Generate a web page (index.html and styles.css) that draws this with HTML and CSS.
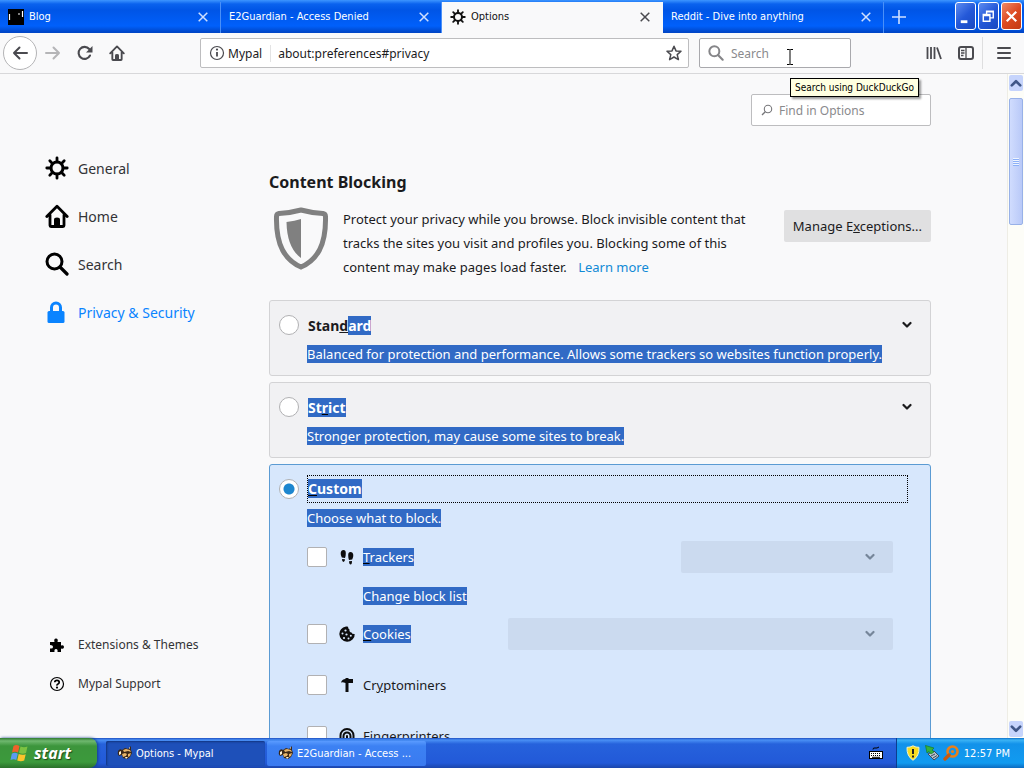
FILE: index.html
```html
<!DOCTYPE html>
<html lang="en">
<head>
    <meta charset="UTF-8">
    <meta name="viewport" content="width=device-width, initial-scale=1.0">
    <title>Options</title>
    <link rel="stylesheet" href="styles.css">
</head>
<body>

    <!-- shared icons -->
    <svg class="defs" width="0" height="0">
        <symbol id="gear" viewBox="0 0 24 24">
            <circle cx="12" cy="12" r="6" fill="none" stroke="currentColor" stroke-width="3"/>
            <path d="M12 1.8v4M12 18.2v4M1.8 12h4M18.2 12h4M4.8 4.8l2.6 2.6M16.6 16.6l2.6 2.6M4.8 19.2l2.6-2.6M16.6 7.4l2.6-2.6" stroke="currentColor" stroke-width="2.8" stroke-linecap="round"/>
        </symbol>
        <symbol id="house" viewBox="0 0 24 24">
            <path d="M1.8 12.5L12 2.2l10.2 10.3M5 11v10.5q0 1 1 1h12q1 0 1-1V11" fill="none" stroke="currentColor" stroke-width="2.8" stroke-linecap="round" stroke-linejoin="round"/>
            <path d="M9 22v-6.500q0-2 3-2t3 2V22z" fill="currentColor"/>
        </symbol>
        <symbol id="glass" viewBox="0 0 24 24">
            <circle cx="9.500" cy="9.500" r="7.500" fill="none" stroke="currentColor" stroke-width="3"/>
            <path d="M15 15l7 7" stroke="currentColor" stroke-width="3.200" stroke-linecap="round"/>
        </symbol>
        <symbol id="cross" viewBox="0 0 10 10">
            <path d="M.7.7l8.600 8.600M9.300.7L.7 9.300" stroke="currentColor" stroke-width="1.500"/>
        </symbol>
        <symbol id="chevron" viewBox="0 0 10 8">
            <path d="M1.500 2L5 5.500 8.500 2" fill="none" stroke="currentColor" stroke-width="2.200" stroke-linecap="round" stroke-linejoin="round"/>
        </symbol>
        <symbol id="raccoon" viewBox="0 0 16 16">
            <path d="M1 6q2-3 4-1l3-2 3 1 3-3v4l1 3-2 4-3 2-4-1-1-3-3 1q-2-2-1-5z" fill="#3b2716"/>
            <path d="M6 5l3-1 4 1 1 2-3-1-4 1zM5 9l3-1 2 1-1 2-3 1zM11 9l3-1-1 3-2 1z" fill="#e8b56a"/>
            <path d="M2 7l2-1v3l-2 1zM12 3l1-1v2zM8 12h3l-2 2z" fill="#fff3d6"/>
        </symbol>
    </svg>

    <header class="tabstrip">
        <div class="tab">
            <svg class="favicon" viewBox="0 0 16 16"><rect width="16" height="16" fill="#000"/><path d="M1.500 5v6M14.500 2v6M10 5h2" stroke="#fff" stroke-width="1.200"/></svg>
            <span class="tab-title">Blog</span>
            <button class="tab-close" aria-label="Close tab"><svg><use href="#cross"/></svg></button>
        </div>
        <div class="tab">
            <span class="tab-title">E2Guardian - Access Denied</span>
            <button class="tab-close" aria-label="Close tab"><svg><use href="#cross"/></svg></button>
        </div>
        <div class="tab active">
            <svg class="favicon"><use href="#gear"/></svg>
            <span class="tab-title">Options</span>
            <button class="tab-close" aria-label="Close tab"><svg><use href="#cross"/></svg></button>
        </div>
        <div class="tab">
            <span class="tab-title">Reddit - Dive into anything</span>
            <button class="tab-close" aria-label="Close tab"><svg><use href="#cross"/></svg></button>
        </div>
        <button class="new-tab" aria-label="New tab"><svg viewBox="0 0 14 14"><path d="M7 0v14M0 7h14" stroke="currentColor" stroke-width="1.600"/></svg></button>
        <div class="window-buttons">
            <button aria-label="Minimize"><svg viewBox="0 0 20 26"><path d="M5 19h7" stroke="#fff" stroke-width="3"/></svg></button>
            <button aria-label="Restore"><svg viewBox="0 0 20 26"><path d="M8 11V8h7v7h-3M8 8.500h7M4.500 11.500h7v7h-7zM4.500 12.500h7" fill="none" stroke="#fff" stroke-width="1.500"/></svg></button>
            <button class="close" aria-label="Close"><svg viewBox="0 0 20 26"><path d="M5 8.500l10 10M15 8.500l-10 10" stroke="#fff" stroke-width="2.300"/></svg></button>
        </div>
    </header>

    <div class="toolbar">
        <button class="tool back" aria-label="Back"><svg viewBox="0 0 16 16"><path d="M15 8H2M7.500 2.500L2 8l5.500 5.500" fill="none" stroke="currentColor" stroke-width="2" stroke-linecap="round" stroke-linejoin="round"/></svg></button>
        <button class="tool" aria-label="Forward" disabled><svg viewBox="0 0 16 16"><path d="M1 8h13M8.500 2.500L14 8l-5.500 5.500" fill="none" stroke="currentColor" stroke-width="2" stroke-linecap="round" stroke-linejoin="round"/></svg></button>
        <button class="tool" aria-label="Reload"><svg viewBox="0 0 16 16"><path d="M13 10.500A6 6 0 1 1 12.200 4" fill="none" stroke="currentColor" stroke-width="2.100" stroke-linecap="round"/><path d="M15.500 1v6.500H9z" fill="currentColor"/></svg></button>
        <button class="tool" aria-label="Home"><svg><use href="#house"/></svg></button>

        <div class="urlbar">
            <svg viewBox="0 0 16 16"><circle cx="8" cy="8" r="6.500" fill="none" stroke="currentColor" stroke-width="1.200"/><path d="M8 7v4.500" stroke="currentColor" stroke-width="1.800"/><circle cx="8" cy="4.600" r="1.100" fill="currentColor"/></svg>
            <span class="identity">Mypal</span>
            <input type="text" aria-label="Address" value="about:preferences#privacy">
            <svg viewBox="0 0 16 16"><path d="M8 1.200l2 4.700 5 .4-3.800 3.300 1.200 5L8 12l-4.400 2.600 1.200-5L1 6.300l5-.4z" fill="none" stroke="currentColor" stroke-width="1.500" stroke-linejoin="round"/></svg>
        </div>
        <div class="searchbar">
            <svg><use href="#glass"/></svg>
            <input type="text" aria-label="Search" placeholder="Search">
            <svg class="ibeam" viewBox="0 0 8 16"><path d="M1 .5h2.500l.5.500.5-.5H7M4 1v14M1 15.500h2.500l.5-.5.5.5H7" fill="none" stroke="#000"/></svg>
            <div class="tooltip">Search using DuckDuckGo</div>
        </div>

        <button class="tool" aria-label="Library"><svg viewBox="0 0 16 16"><path d="M1.500 2v12M5 2v12M8.500 2v12M11 2.500L15 14" stroke="currentColor" stroke-width="1.800"/></svg></button>
        <button class="tool" aria-label="Sidebars"><svg viewBox="0 0 16 16"><rect x="1" y="2" width="14" height="12" rx="2" fill="none" stroke="currentColor" stroke-width="2"/><path d="M8 2v12M3 5.500h3.500M3 8h3.500M3 10.500h2.500" stroke="currentColor" stroke-width="1.300"/></svg></button>
        <button class="tool menu" aria-label="Open menu"><svg viewBox="0 0 16 16"><path d="M2 3h12M2 8h12M2 13h12" stroke="currentColor" stroke-width="2" stroke-linecap="round"/></svg></button>
    </div>

    <div class="page">
        <nav class="sidebar">
            <a href="#general"><svg><use href="#gear"/></svg>General</a>
            <a href="#home"><svg><use href="#house"/></svg>Home</a>
            <a href="#search"><svg><use href="#glass"/></svg>Search</a>
            <a href="#privacy" class="selected"><svg viewBox="0 0 24 24"><path d="M4 11h14q1.500 0 1.500 1.500v9q0 1.500-1.500 1.500H4q-1.500 0-1.500-1.500v-9Q2.500 11 4 11z" fill="currentColor"/><path d="M6.500 12V7.500a4.500 4.500 0 0 1 9 0V12" fill="none" stroke="currentColor" stroke-width="3"/></svg>Privacy &amp; Security</a>

            <div class="sidebar-footer">
                <a href="#addons"><svg viewBox="0 0 16 16"><path d="M1 5h4.500q-1-3.500 1.500-3.500T8.500 5H12v3.500q3-1 3 1.500t-3 1.500V15H8.500q.5-3-1.500-3t-1.500 3H1v-3.500q3 .5 3-1.500T1 8z" fill="currentColor"/></svg>Extensions &amp; Themes</a>
                <a href="#support"><svg viewBox="0 0 16 16"><circle cx="8" cy="8" r="6.500" fill="none" stroke="currentColor" stroke-width="1.200"/><path d="M5.800 6.300q0-2 2.200-2t2.200 2q0 1.200-1.200 1.700T8 9.600" fill="none" stroke="currentColor" stroke-width="1.700"/><circle cx="8" cy="11.600" r="1.100" fill="currentColor"/></svg>Mypal Support</a>
            </div>
        </nav>

        <main class="content">
            <label class="find">
                <svg viewBox="0 0 12 12"><circle cx="7" cy="5" r="3.700" fill="none" stroke="currentColor" stroke-width="1.100"/><path d="M4.300 7.700L1 11" stroke="currentColor" stroke-width="1.300"/></svg>
                <input type="text" aria-label="Find in Options" placeholder="Find in Options">
            </label>

            <h1>Content Blocking</h1>

            <div class="intro">
                <svg class="shield" viewBox="0 0 56 66">
                    <path d="M28 3Q39 6 50 6.500q2.500.5 2.500 3Q53 30 46.500 43 40 55 28 60 16 55 9.500 43 3 30 3.500 9.500q0-2.500 2.500-3Q17 6 28 3z" fill="none" stroke="#808080" stroke-width="5"/>
                    <path d="M28 12v39Q14 41 13.500 15 22 14 28 12z" fill="#808080"/>
                </svg>
                <p>Protect your privacy while you browse. Block invisible content that tracks the sites you visit and profiles you. Blocking some of this content may make pages load faster. <a href="#learn-more">Learn more</a></p>
                <button class="exceptions">Manage E<u>x</u>ceptions...</button>
            </div>

            <section class="card">
                <div class="card-head">
                    <input type="radio" name="blocking" id="standard">
                    <label for="standard">Stan<u>d</u><span class="sel">ard</span></label>
                    <button class="expand" aria-label="Expand"><svg><use href="#chevron"/></svg></button>
                </div>
                <p class="card-text"><span class="sel">Balanced for protection and performance. Allows some trackers so websites function properly.</span></p>
            </section>

            <section class="card">
                <div class="card-head">
                    <input type="radio" name="blocking" id="strict">
                    <label for="strict"><span class="sel">St<u>r</u>ict</span></label>
                    <button class="expand" aria-label="Expand"><svg><use href="#chevron"/></svg></button>
                </div>
                <p class="card-text"><span class="sel">Stronger protection, may cause some sites to break.</span></p>
            </section>

            <section class="card chosen">
                <div class="card-head">
                    <input type="radio" name="blocking" id="custom" checked>
                    <label for="custom"><span class="sel"><u>C</u>ustom</span></label>
                </div>
                <p class="card-text"><span class="sel">Choose what to block.</span></p>

                <div class="options">
                    <div class="option">
                        <input type="checkbox" id="trackers">
                        <svg viewBox="0 0 16 16"><path d="M4.500 1q2.300 0 2.300 3.200Q6.800 7 6 9L2.800 8.600Q1.500 6 1.700 4 2 1 4.500 1zM3 10l3 .3q0 2.700-1.600 2.700Q3 13 3 10zM11.500 3q2.500 0 2.800 3 .2 2-1.100 4.600L10 11q-.8-2-.8-4.800Q9.200 3 11.500 3zM10 12.300l3-.3q0 3.500-1.400 3.500T10 12.300z" fill="currentColor"/></svg>
                        <label for="trackers"><span class="sel"><u>T</u>rackers</span></label>
                        <div class="picker">
                            <select aria-label="Trackers to block" disabled></select>
                            <svg><use href="#chevron"/></svg>
                        </div>
                    </div>
                    <button class="block-list"><span class="sel">Change block list</span></button>
                    <div class="option">
                        <input type="checkbox" id="cookies">
                        <svg viewBox="0 0 16 16"><path d="M7 .5q1.500-.3 2 .2 0 2 1.500 2.800Q10 6 12.500 6.500q.5 1.700 3.200 1.500Q16 11 13.500 13.500 11 15.800 8 15.700 1 15 .3 8 .5 2 7 .5z" fill="currentColor"/><g fill="#d7e7fc"><circle cx="6.500" cy="4.500" r="1.100"/><circle cx="3.500" cy="7.500" r="1"/><circle cx="7.500" cy="8.500" r="1.100"/><circle cx="5" cy="12" r="1.100"/><circle cx="9.500" cy="12.500" r="1"/><circle cx="11.800" cy="9.800" r="1"/></g></svg>
                        <label for="cookies"><span class="sel"><u>C</u>ookies</span></label>
                        <div class="picker wide">
                            <select aria-label="Cookies to block" disabled></select>
                            <svg><use href="#chevron"/></svg>
                        </div>
                    </div>
                    <div class="option">
                        <input type="checkbox" id="cryptominers">
                        <svg viewBox="0 0 16 16"><path d="M2 5.500Q3 2 6.500 2V1h3v1H14v4H9.500v9h-3V6Q4 5 2 5.500z" fill="currentColor"/></svg>
                        <label for="cryptominers">Cr<u>y</u>ptominers</label>
                    </div>
                    <div class="option">
                        <input type="checkbox" id="fingerprinters">
                        <svg viewBox="0 0 16 16"><path d="M1.500 11V7.500a6.500 6.500 0 0 1 13 0v4M4.500 13V8a3.500 3.500 0 0 1 7 0v6M8 15V8" fill="none" stroke="currentColor" stroke-width="2" stroke-linecap="round"/></svg>
                        <label for="fingerprinters"><u>F</u>ingerprinters</label>
                    </div>
                </div>
            </section>
        </main>

        <div class="scrollbar">
            <button aria-label="Scroll up"><svg class="flip"><use href="#chevron"/></svg></button>
            <div class="thumb"></div>
            <button class="down" aria-label="Scroll down"><svg><use href="#chevron"/></svg></button>
        </div>
    </div>

    <footer class="taskbar">
        <button class="start">
            <svg viewBox="0 0 20 20"><path d="M3.500 3Q6 1 9.500 3L8 9.500Q5 8 2 9.500z" fill="#f0612b"/><path d="M10.500 3.500Q14 5 17.500 3.500L16 10q-3.500 1.500-7-.2z" fill="#7cc242"/><path d="M1.800 10.700q3-1.700 6 0L6.300 17Q3.500 15.500.5 17z" fill="#5b9bf0"/><path d="M8.700 11q3.500 1.500 7 .2L14.200 17.500Q11 19 7.200 17.500z" fill="#fcc42c"/></svg>
            start
        </button>
        <button class="task pressed"><svg><use href="#raccoon"/></svg>Options - Mypal</button>
        <button class="task"><svg><use href="#raccoon"/></svg>E2Guardian - Access ...</button>
        <svg class="keyboard" viewBox="0 0 16 16"><rect x="1.500" y="6.500" width="13" height="7" fill="#fff" stroke="#000"/><path d="M3 8.500h10M3 10.500h10" stroke="#000" stroke-dasharray="1 1"/><path d="M4 12.300h8" stroke="#000"/><path d="M5 4.500q0-2 2-1.500t4-1" fill="none" stroke="#000"/></svg>
        <div class="tray">
            <svg viewBox="0 0 16 16"><path d="M8 .8Q11 2.500 14 2.300 14.500 11 8 15.300 1.500 11 2 2.300 5 2.500 8 .8z" fill="#f8dc20" stroke="#f5f3c4"/><path d="M8 4v5M8 10.500v2" stroke="#222" stroke-width="2"/></svg>
            <svg viewBox="0 0 16 16"><path d="M4 9l6-3 5 5-5 4z" fill="#b9c4cf" stroke="#3d4b58"/><path d="M7 11l4-2M9 13l4-2.500" stroke="#3d4b58"/><path d="M1.500.5L10 3 8 5l2 2-3 2-2-2.500L3 8z" fill="#35b13c" stroke="#13731c" stroke-width=".6"/></svg>
            <svg viewBox="0 0 16 16"><circle cx="9.500" cy="6.500" r="5" fill="none" stroke="#e8801a" stroke-width="2.600"/><path d="M6 10L2 14" stroke="#c7590f" stroke-width="3.400" stroke-linecap="round"/><circle cx="9.500" cy="6.500" r="1.600" fill="#e8801a"/></svg>
            <time>12:57 PM</time>
        </div>
    </footer>

</body>
</html>
```
FILE: styles.css
```css
* {
    box-sizing: border-box;
}

body {
    margin: 0;
    height: 100vh;
    display: flex;
    flex-direction: column;
    overflow: hidden;
    font-family: "Noto Sans", "Open Sans", sans-serif;
    font-size: 13px;
    color: #1b1b1d;
    background: #f9f9fa;
}

button, input, select {
    font: inherit;
    color: inherit;
    margin: 0;
    padding: 0;
    border: none;
    background: none;
}

svg {
    display: block;
    flex: none;
    width: 16px;
    height: 16px;
}

.defs {
    position: absolute;
    width: 0;
    height: 0;
}

/* tabs */
.tabstrip {
    display: flex;
    flex: none;
    height: 33px;
    padding-top: 2px;
    background: linear-gradient(#3d95ff 0, #0a62ee 4px, #0055e6 10px, #0060fb 26px, #0046c8 32px);
    font-family: "DejaVu Sans Condensed", "DejaVu Sans", sans-serif;
    font-size: 11px;
    color: #fff;
}

.tab {
    display: flex;
    align-items: center;
    flex: 0 1 221px;
    min-width: 0;
    gap: 5px;
    padding: 0 12px 2px 8px;
    border-right: 1px solid #4a90f8;
}

.tab.active {
    background: #f9f9fa;
    color: #111;
    border-right-color: #f9f9fa;
}

.tab-title {
    flex: 1;
    overflow: hidden;
    white-space: nowrap;
}

.tab-close svg {
    width: 10px;
    height: 10px;
    color: #cfe0ff;
}

.active .tab-close svg {
    color: #4a4a4f;
}

.new-tab {
    padding: 0 8px 2px;
    color: #cfe0ff;
}

.new-tab svg {
    width: 14px;
    height: 14px;
}

.window-buttons {
    display: flex;
    gap: 2px;
    margin-left: auto;
    padding-right: 2px;
}

.window-buttons button {
    width: 21px;
    height: 28px;
    border: 1px solid #fff;
    border-radius: 3px;
    background: linear-gradient(135deg, #5d8cf0, #2458d8 50%, #1a49c0);
}

.window-buttons .close {
    background: linear-gradient(135deg, #f08a68, #dd4a22 50%, #c23a14);
}

.window-buttons svg {
    width: 19px;
    height: 26px;
}

/* navigation toolbar */
.toolbar {
    display: flex;
    align-items: center;
    flex: none;
    height: 41px;
    padding: 0 3px;
    border-bottom: 1px solid #d8d8da;
    background: #f9f9fa;
    color: #4a4a4f;
    font-size: 12px;
}

.tool {
    display: flex;
    align-items: center;
    justify-content: center;
    width: 32px;
    height: 32px;
}

.tool:disabled {
    color: #b5b5b7;
}

.tool.back {
    width: 34px;
    height: 34px;
    border: 1px solid #b4b4b6;
    border-radius: 50%;
    background: #fff;
}

.tool.menu {
    width: 39px;
    padding-left: 4px;
    border-left: 1px solid #dededf;
}

.urlbar, .searchbar {
    display: flex;
    align-items: center;
    height: 30px;
    border: 1px solid #bdbdbf;
    border-radius: 2px;
    background: #fff;
}

.urlbar {
    flex: 1;
    margin: 0 10px 0 67px;
    padding: 0 6px 0 8px;
}

.identity {
    margin-left: 3px;
    padding-right: 8px;
    border-right: 1px solid #e3e3e4;
    color: #1b1b1d;
}

.urlbar input {
    flex: 1;
    min-width: 0;
    padding-left: 7px;
    color: #1b1b1d;
}

.searchbar {
    position: relative;
    flex: none;
    width: 152px;
    margin-right: 67px;
    padding: 0 8px;
    gap: 7px;
    border-color: #a9a9ad;
    color: #858588;
}

.searchbar input {
    flex: 1;
    min-width: 0;
}

input::placeholder {
    color: #8a8a8d;
    opacity: 1;
}

.ibeam {
    position: absolute;
    left: 86px;
    top: 10px;
    width: 8px;
}

.tooltip {
    position: absolute;
    left: 90px;
    top: 39px;
    z-index: 2;
    padding: 0 4px;
    border: 1px solid #000;
    background: #ffffe1;
    box-shadow: 2px 2px 2px rgba(0, 0, 0, 0.4);
    color: #000;
    font-family: "DejaVu Sans Condensed", "DejaVu Sans", sans-serif;
    font-size: 10px;
    line-height: 17px;
    white-space: nowrap;
}

/* preferences page */
.page {
    display: flex;
    flex: 1;
    min-height: 0;
}

.sidebar {
    display: flex;
    flex-direction: column;
    flex: none;
    width: 269px;
    padding: 70px 0 35px 45px;
    font-size: 14px;
}

.sidebar a {
    display: flex;
    align-items: center;
    gap: 9px;
    height: 48px;
    color: #333336;
    text-decoration: none;
}

.sidebar svg {
    width: 24px;
    height: 24px;
    color: #000;
}

.sidebar .selected, .sidebar .selected svg {
    color: #0a84ff;
}

.sidebar-footer {
    margin-top: auto;
    font-size: 12px;
}

.sidebar .sidebar-footer a {
    height: 39px;
}

.sidebar .sidebar-footer svg {
    width: 24px;
    height: 16px;
}

.content {
    flex: 1;
    min-width: 0;
    padding: 20px 76px 0 0;
    overflow: hidden;
}

.find {
    display: flex;
    align-items: center;
    gap: 6px;
    width: 180px;
    height: 32px;
    margin-left: auto;
    padding: 0 9px;
    border: 1px solid #bdbdbf;
    border-radius: 2px;
    background: #fff;
    color: #77777a;
    font-size: 12px;
}

.find svg {
    width: 12px;
    height: 12px;
}

.find input {
    flex: 1;
    min-width: 0;
}

h1 {
    margin: 44px 0 13px;
    font-size: 16px;
    line-height: 24px;
}

.intro {
    display: flex;
    align-items: flex-start;
    margin-bottom: 21px;
}

.shield {
    width: 56px;
    height: 66px;
    margin: 0 14px 0 4px;
}

.intro p {
    flex: 1;
    margin: 0 14px 0 0;
    line-height: 24px;
}

.intro a {
    margin-left: 8px;
    color: #118ad6;
    text-decoration: none;
}

.exceptions {
    flex: none;
    height: 32px;
    margin-top: 3px;
    padding: 0 9px;
    border-radius: 2px;
    background: #e0e0e1;
}

.card {
    margin-bottom: 6px;
    padding: 10px 22px 6px 9px;
    border: 1px solid #d3d3d5;
    border-radius: 3px;
    background: #f1f1f3;
}

.card.chosen {
    padding-bottom: 30px;
    border-color: #5b9bd3;
    background: #d7e7fc;
}

.card-head {
    display: flex;
    align-items: center;
    gap: 8px;
    height: 28px;
    font-size: 14px;
    font-weight: bold;
}

.card-head label {
    flex: 1;
    padding-left: 1px;
}

.chosen .card-head label {
    padding-left: 0;
    height: 28px;
    line-height: 26px;
    border: 1px dotted #000;
}

.expand svg {
    width: 10px;
    height: 8px;
    margin-right: -4px;
}

.card-text {
    margin: 0;
    padding-left: 28px;
    line-height: 30px;
}

.sel {
    background: #316ac5;
    color: #fff;
}

.sel u {
    text-decoration-color: #000;
}

input[type=radio], input[type=checkbox] {
    appearance: none;
    flex: none;
    width: 20px;
    height: 20px;
    border: 1px solid #b1b1b3;
    border-radius: 2px;
    background: #fff;
}

input[type=radio] {
    border-radius: 50%;
}

input[type=radio]:checked {
    background: radial-gradient(circle, #1d86cf 5px, #fff 6px);
}

.options {
    padding: 8px 15px 0 28px;
}

.option {
    display: flex;
    align-items: center;
    height: 32px;
    margin-bottom: 19px;
}

.option > svg {
    margin: 0 8px 0 12px;
    color: #0c0c0d;
}

.option:has(+ .block-list) {
    margin-bottom: 0;
}

.block-list {
    display: block;
    height: 45px;
    margin-left: 56px;
}

.picker {
    position: relative;
    width: 212px;
    margin-left: auto;
}

.picker.wide {
    width: 385px;
}

.picker select {
    appearance: none;
    display: block;
    width: 100%;
    height: 32px;
    border-radius: 2px;
    background: #cbdaef;
    opacity: 1;
}

.picker svg {
    position: absolute;
    right: 18px;
    top: 12px;
    width: 10px;
    height: 8px;
    color: #76869a;
}

/* scrollbar */
.scrollbar {
    display: flex;
    flex-direction: column;
    flex: none;
    width: 17px;
    padding: 1px 1px 1px;
    border-left: 1px solid #eeede5;
    background: #fdfdf8;
}

.scrollbar button {
    display: flex;
    align-items: center;
    justify-content: center;
    height: 16px;
    border-radius: 2px;
    background: #c6d4fc;
    color: #3f5687;
}

.scrollbar button svg {
    width: 12px;
    height: 10px;
}

.scrollbar .flip {
    transform: rotate(180deg);
}

.scrollbar .down {
    margin-top: auto;
}

.thumb {
    height: 127px;
    margin-top: 7px;
    border: 1px solid #98b1e8;
    border-radius: 2px;
    background:
        repeating-linear-gradient(#eef4fe 0 1px, #8cb0f8 1px 2px) center / 6px 8px no-repeat,
        linear-gradient(90deg, #d0dcfe, #b9c9f8);
}

/* taskbar */
.taskbar {
    display: flex;
    align-items: center;
    flex: none;
    height: 30px;
    background: linear-gradient(#1f4fc0 0, #4a90f5 2px, #2662dc 6px, #2259d8 25px, #1b45ab 30px);
    color: #fff;
    font-family: "DejaVu Sans Condensed", "DejaVu Sans", sans-serif;
    font-size: 11px;
}

.start {
    display: flex;
    align-items: center;
    gap: 4px;
    width: 97px;
    height: 30px;
    margin-right: 9px;
    padding: 0 0 1px 10px;
    border-radius: 0 8px 8px 0;
    background: linear-gradient(#2f7a2f 0, #6fb86f 3px, #3c953c 8px, #3c9a3c 24px, #2a702a 30px);
    box-shadow: 1px 0 3px #163f86;
    font-family: "Open Sans", sans-serif;
    font-size: 16px;
    font-style: italic;
    font-weight: bold;
    text-shadow: 1px 1px 1px #1c4a1c;
}

.start svg {
    width: 20px;
    height: 20px;
}

.task {
    display: flex;
    align-items: center;
    gap: 3px;
    width: 159px;
    height: 25px;
    margin-right: 2px;
    padding-left: 11px;
    border-radius: 2px;
    background: linear-gradient(#5a9bff, #3c81f3 5px, #3a7af0);
    white-space: nowrap;
}

.task.pressed {
    background: #1e50b9;
    box-shadow: inset 1px 1px 2px #12347f;
}

.keyboard {
    margin: 0 12px 0 auto;
}

.tray {
    display: flex;
    align-items: center;
    gap: 3px;
    height: 30px;
    padding: 0 14px 0 8px;
    border-left: 1px solid #0c3e8f;
    background: linear-gradient(#0e6fc8 0, #3cb4f5 2px, #1292ea 6px, #119bf0 25px, #0c6bc0 30px);
}

.tray time {
    margin-left: 2px;
}
```
